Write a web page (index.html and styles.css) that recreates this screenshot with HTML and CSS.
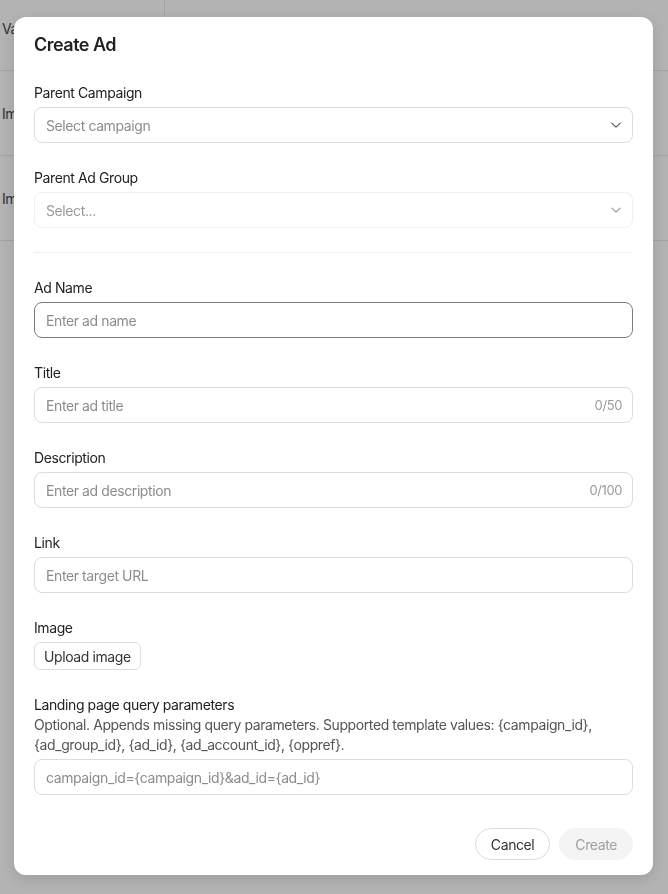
FILE: index.html
```html
<!DOCTYPE html>
<html lang="en">
<head>
<meta charset="utf-8">
<title>Create Ad</title>
<link rel="stylesheet" href="styles.css">
</head>
<body>
<div class="page">
  <div class="table">
    <div class="row row-head"><div class="cell cell-first">Variant</div><div class="cell">Status</div></div>
    <div class="row"><div class="cell cell-first">Image ad</div><div class="cell"></div></div>
    <div class="row"><div class="cell cell-first">Image ad</div><div class="cell"></div></div>
  </div>
</div>
<div class="overlay">
  <div class="modal" role="dialog" aria-label="Create Ad">
    <h2 class="modal-title">Create Ad</h2>

    <div class="field">
      <div class="label">Parent Campaign</div>
      <div class="input select">
        <span class="placeholder">Select campaign</span>
        <svg class="chevron" width="12" height="12" viewBox="0 0 12 12"><path d="M1.8 4.2 L6 8.2 L10.2 4.2" fill="none" stroke="#555" stroke-width="1.1" stroke-linecap="round" stroke-linejoin="round"/></svg>
      </div>
    </div>

    <div class="field">
      <div class="label">Parent Ad Group</div>
      <div class="input select disabled">
        <span class="placeholder">Select...</span>
        <svg class="chevron" width="12" height="12" viewBox="0 0 12 12"><path d="M1.8 4.2 L6 8.2 L10.2 4.2" fill="none" stroke="#999" stroke-width="1.1" stroke-linecap="round" stroke-linejoin="round"/></svg>
      </div>
    </div>

    <div class="divider"></div>

    <div class="field">
      <div class="label">Ad Name</div>
      <div class="input focused"><span class="placeholder">Enter ad name</span></div>
    </div>

    <div class="field">
      <div class="label">Title</div>
      <div class="input"><span class="placeholder">Enter ad title</span><span class="counter">0/50</span></div>
    </div>

    <div class="field">
      <div class="label">Description</div>
      <div class="input"><span class="placeholder">Enter ad description</span><span class="counter">0/100</span></div>
    </div>

    <div class="field">
      <div class="label">Link</div>
      <div class="input"><span class="placeholder">Enter target URL</span></div>
    </div>

    <div class="field">
      <div class="label">Image</div>
      <button class="upload" type="button">Upload image</button>
    </div>

    <div class="field">
      <div class="label label-tight">Landing page query parameters</div>
      <p class="help">Optional. Appends missing query parameters. Supported template values: {campaign_id}, {ad_group_id}, {ad_id}, {ad_account_id}, {oppref}.</p>
      <div class="input"><span class="placeholder">campaign_id={campaign_id}&amp;ad_id={ad_id}</span></div>
    </div>

    <div class="footer">
      <button class="btn btn-cancel" type="button">Cancel</button>
      <button class="btn btn-create" type="button">Create</button>
    </div>
  </div>
</div>
</body>
</html>
```

FILE: styles.css
```css
* { box-sizing: border-box; }
html, body { margin: 0; padding: 0; }
body {
  background: #b3b3b3;
  font-family: Inter, "Noto Sans", "Liberation Sans", sans-serif;
  letter-spacing: -0.4px;
  overflow: hidden;
  width: 668px;
  height: 894px;
}
.page { width: 668px; }
.table { margin-top: -14px; }
.row {
  display: flex;
  height: 85px;
  border-bottom: 1px solid #a2a2a2;
  align-items: center;
}
.cell {
  font-size: 14px;
  color: #2f2f2f;
  padding-left: 2px;
  height: 100%;
  display: flex;
  align-items: center;
}
.cell-first { width: 165px; }
.row-head .cell-first { border-right: 1px solid #a2a2a2; }
.row .cell:not(.cell-first) { color: transparent; }

.overlay {
  position: fixed;
  inset: 0;
}
.modal {
  margin: 17px 0 0 14px;
  width: 639px;
  background: #fff;
  border-radius: 12px;
  padding: 14px 20px 15px;
  box-shadow: 0 4px 14px rgba(0,0,0,0.12);
  display: flex;
  flex-direction: column;
}
.modal-title {
  margin: 0 0 24px;
  font-size: 18px;
  line-height: 28px;
  font-weight: 600;
  letter-spacing: -0.5px;
  color: #222;
}
.field { display: flex; flex-direction: column; margin-bottom: 25px; }
.label {
  font-size: 14px;
  line-height: 20px;
  color: #222;
  margin-bottom: 4px;
}
.label-tight { margin-bottom: 0; }
.help {
  margin: 0 0 4px;
  font-size: 14px;
  line-height: 20px;
  color: #555;
}
.input {
  height: 36px;
  border: 1px solid #dcdcdc;
  border-radius: 8px;
  display: flex;
  align-items: center;
  justify-content: space-between;
  padding: 0 10px 0 11px;
  background: #fff;
}
.input.disabled { border-color: #efefef; }
.input.focused { border-color: #7c7c7c; }
.placeholder {
  font-size: 14px;
  color: #8c8c8c;
}
.disabled .placeholder { color: #9a9a9a; }
.counter {
  font-size: 13px;
  color: #9a9a9a;
}
.divider {
  height: 1px;
  background: #eeeeee;
  margin: -1px 0 25px;
}
.upload {
  align-self: flex-start;
  height: 28px;
  padding: 0 9px;
  border: 1px solid #dedede;
  border-radius: 6px;
  background: #fff;
  font-family: inherit;
  letter-spacing: inherit;
  font-size: 14px;
  color: #333;
}
.footer {
  display: flex;
  justify-content: flex-end;
  gap: 9px;
  margin-top: 8px;
}
.btn {
  height: 32px;
  border-radius: 999px;
  font-family: inherit;
  letter-spacing: inherit;
  font-size: 14px;
  padding: 0 15px;
}
.btn-cancel {
  border: 1px solid #dcdcdc;
  background: #fff;
  color: #333;
}
.btn-create {
  border: 1px solid #f4f4f4;
  background: #f4f4f4;
  color: #a0a0a0;
}
```
